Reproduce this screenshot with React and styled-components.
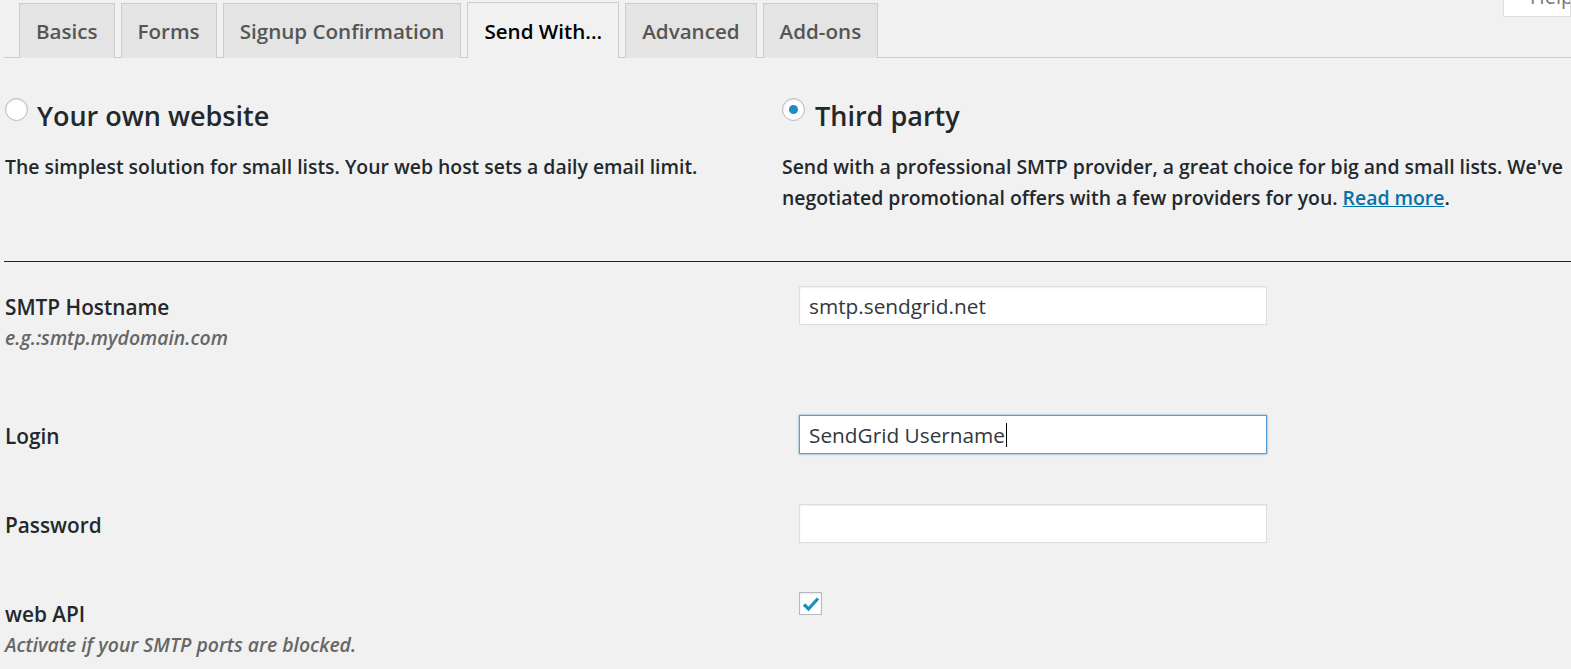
import React from 'react';
import styled, { createGlobalStyle } from 'styled-components';

const GlobalStyle = createGlobalStyle`
  html, body {
    margin: 0;
    padding: 0;
    background: #f1f1f1;
  }
  body {
    font-family: 'Open Sans', 'Noto Sans', sans-serif;
    color: #23282d;
    overflow: hidden;
  }
`;

const Page = styled.div`
  width: 1571px;
  height: 669px;
  padding-left: 4px;
  box-sizing: border-box;
  overflow: hidden;
`;

// tabs along the top
const TabBar = styled.div`
  display: flex;
  align-items: flex-end;
  gap: 6px;
  margin-top: 1px;
  padding-left: 15px;
  border-bottom: 1px solid #cccccc;
  height: 56px;
`;

const Tab = styled.div`
  box-sizing: border-box;
  padding: 0 16px;
  display: flex;
  align-items: center;
  font-size: 20.6px;
  font-weight: 600;
  border: 1px solid #cccccc;
  border-bottom: none;
  margin-bottom: -1px;
  background: ${({ $active }) => ($active ? '#f1f1f1' : '#e4e4e4')};
  color: ${({ $active }) => ($active ? '#000000' : '#555555')};
  height: ${({ $active }) => ($active ? '56px' : '55px')};
`;

const HelpLink = styled.div`
  margin-left: auto;
  align-self: flex-start;
  margin-top: -15px;
  height: 31px;
  width: 68px;
  box-sizing: border-box;
  background: #ffffff;
  border: 1px solid #dddddd;
  border-top: none;
  font-size: 20px;
  color: #72777c;
  padding-left: 26px;
  line-height: 22px;
  overflow: hidden;
`;

// the two sending options
const Options = styled.div`
  display: grid;
  grid-template-columns: 777px 1fr;
  padding-left: 1px;
  margin-top: 40px;
`;

const Option = styled.div`
  display: flex;
  flex-direction: column;
`;

const OptionHead = styled.label`
  display: flex;
  align-items: flex-start;
  gap: ${({ $gap }) => $gap}px;
  font-size: 27px;
  font-weight: 600;
  line-height: 36px;
  color: #23282d;
`;

const Radio = styled.span`
  width: 23px;
  height: 23px;
  box-sizing: border-box;
  border-radius: 50%;
  border: 1px solid #b4b9be;
  background: #ffffff;
  box-shadow: inset 0 1px 2px rgba(0, 0, 0, 0.1);
  display: flex;
  align-items: center;
  justify-content: center;
  flex-shrink: 0;

  &::after {
    content: '';
    display: ${({ $checked }) => ($checked ? 'block' : 'none')};
    width: 9px;
    height: 9px;
    border-radius: 50%;
    background: #1e8cbe;
  }
`;

const OptionDesc = styled.p`
  margin: 17px 0 0 0;
  font-size: 19.4px;
  font-weight: 600;
  line-height: 31px;
  color: #23282d;
  white-space: nowrap;

  a {
    color: #0073aa;
    text-decoration: underline;
  }
`;

const Rule = styled.hr`
  margin: 48px 0 24px 0;
  border: none;
  border-top: 1.5px solid #222222;
  height: 0;
`;

// settings rows
const Row = styled.div`
  display: grid;
  grid-template-columns: 794px 468px;
  padding-left: 1px;
  margin-bottom: ${({ $space }) => $space}px;
`;

const LabelCell = styled.div`
  display: flex;
  flex-direction: column;
`;

const FieldLabel = styled.label`
  font-size: 20.8px;
  font-weight: 600;
  line-height: 38px;
  padding-top: 2px;
  color: #23282d;
`;

const Hint = styled.span`
  font-size: 19.4px;
  font-style: italic;
  font-weight: 600;
  line-height: 28px;
  margin-top: -2px;
  color: #666666;
`;

const FieldCell = styled.div`
  position: relative;
`;

const TextInput = styled.input`
  width: 468px;
  height: 39px;
  box-sizing: border-box;
  padding: 0 9px;
  font-family: 'Open Sans', 'Noto Sans', sans-serif;
  font-size: 20.8px;
  color: #32373c;
  background: #ffffff;
  border: 1px solid ${({ $focused }) => ($focused ? '#5b9dd9' : '#dddddd')};
  box-shadow: ${({ $focused }) =>
    $focused ? '0 0 2px rgba(30, 140, 190, 0.8)' : 'inset 0 1px 2px rgba(0, 0, 0, 0.07)'};
  outline: none;
  margin: 0;
`;

const Caret = styled.span`
  position: absolute;
  left: 207px;
  top: 8px;
  width: 1px;
  height: 24px;
  background: #000000;
`;

const CheckBox = styled.span`
  width: 23px;
  height: 23px;
  box-sizing: border-box;
  border: 1px solid #b4b9be;
  background: #ffffff;
  box-shadow: inset 0 1px 2px rgba(0, 0, 0, 0.1);
  display: flex;
  align-items: center;
  justify-content: center;
  margin-top: -1px;
`;

const tabs = ['Basics', 'Forms', 'Signup Confirmation', 'Send With...', 'Advanced', 'Add-ons'];

export default function App() {
  return (
    <Page>
      <GlobalStyle />
      <TabBar>
        {tabs.map((t) => (
          <Tab key={t} $active={t === 'Send With...'}>{t}</Tab>
        ))}
        <HelpLink>Help</HelpLink>
      </TabBar>

      <Options>
        <Option>
          <OptionHead $gap={9}>
            <Radio />
            Your own website
          </OptionHead>
          <OptionDesc>
            The simplest solution for small lists. Your web host sets a daily email limit.
          </OptionDesc>
        </Option>
        <Option>
          <OptionHead $gap={10}>
            <Radio $checked />
            Third party
          </OptionHead>
          <OptionDesc>
            Send with a professional SMTP provider, a great choice for big and small lists. We've
            <br />
            negotiated promotional offers with a few providers for you. <a href="#">Read more</a>.
          </OptionDesc>
        </Option>
      </Options>

      <Rule />

      <Row $space={63}>
        <LabelCell>
          <FieldLabel>SMTP Hostname</FieldLabel>
          <Hint>e.g.:smtp.mydomain.com</Hint>
        </LabelCell>
        <FieldCell>
          <TextInput defaultValue="smtp.sendgrid.net" />
        </FieldCell>
      </Row>

      <Row $space={49}>
        <LabelCell>
          <FieldLabel>Login</FieldLabel>
        </LabelCell>
        <FieldCell>
          <TextInput $focused defaultValue="SendGrid Username" />
          <Caret />
        </FieldCell>
      </Row>

      <Row $space={49}>
        <LabelCell>
          <FieldLabel>Password</FieldLabel>
        </LabelCell>
        <FieldCell>
          <TextInput type="password" defaultValue="" />
        </FieldCell>
      </Row>

      <Row $space={0}>
        <LabelCell>
          <FieldLabel>web API</FieldLabel>
          <Hint>Activate if your SMTP ports are blocked.</Hint>
        </LabelCell>
        <FieldCell>
          <CheckBox>
            <svg width="18" height="16" viewBox="0 0 18 16">
              <path d="M2 8.5 L6.5 13 L16 2.5" fill="none" stroke="#1e8cbe" strokeWidth="3.2" strokeLinecap="butt" strokeLinejoin="miter" />
            </svg>
          </CheckBox>
        </FieldCell>
      </Row>
    </Page>
  );
}
